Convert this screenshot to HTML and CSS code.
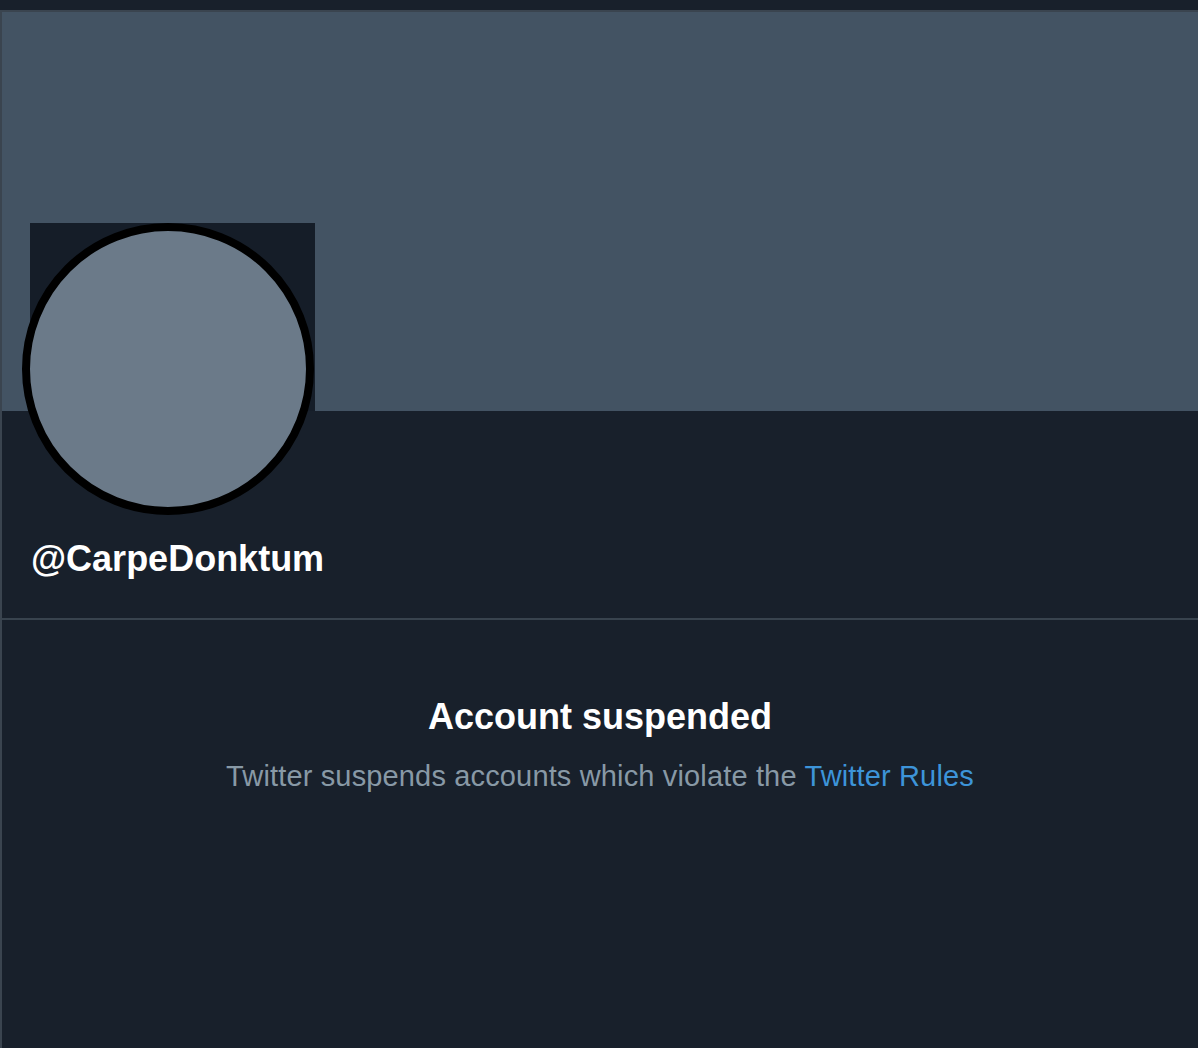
FILE: index.html
```html
<!DOCTYPE html>
<html>
<head>
<meta charset="utf-8">
<link rel="stylesheet" href="styles.css">
</head>
<body>
<div class="topbar"></div>
<main class="profile">
  <div class="banner"></div>
  <section class="header">
    <div class="avatar-wrap">
      <div class="avatar"></div>
    </div>
    <h1 class="handle">@CarpeDonktum</h1>
  </section>
  <section class="suspended">
    <h2 class="title">Account suspended</h2>
    <p class="desc">Twitter suspends accounts which violate the <a class="link" href="#">Twitter Rules</a></p>
  </section>
</main>
</body>
</html>
```
FILE: styles.css
```css
html, body {
  margin: 0;
  padding: 0;
  background: #18202b;
  height: 100%;
}
body {
  font-family: "Liberation Sans", Arial, sans-serif;
  overflow: hidden;
}
.topbar {
  height: 10px;
  background: #18202b;
}
.profile {
  border-left: 2px solid #3a444f;
  border-top: 2px solid #3a444f;
  min-height: 1036px;
}
.banner {
  height: 399px;
  background: #435363;
}
.header {
  display: flow-root;
  padding: 0 28px;
  border-bottom: 2px solid #38434e;
  height: 207px;
}
.avatar-wrap {
  margin-top: -188px;
  width: 285px;
  height: 188px;
  background: #151d28;
}
.avatar {
  width: 276px;
  height: 276px;
  margin-left: -8px;
  border: 8px solid #000;
  border-radius: 50%;
  background: #6b7a89;
}
.handle {
  margin: 0;
  padding-top: 128px;
  padding-left: 1px;
  color: #ffffff;
  font-size: 36px;
  font-weight: bold;
  line-height: 40px;
}
.suspended {
  text-align: center;
  padding-top: 77px;
}
.title {
  margin: 0;
  color: #ffffff;
  font-size: 36px;
  font-weight: bold;
  line-height: 40px;
}
.desc {
  margin: 22px 0 0;
  color: #8899a6;
  font-size: 29px;
  line-height: 34px;
  letter-spacing: 0.15px;
}
.link {
  color: #3d94d9;
  text-decoration: none;
}
```
